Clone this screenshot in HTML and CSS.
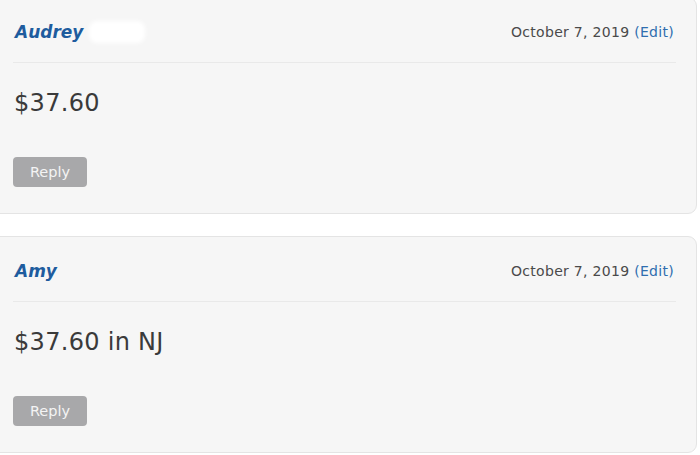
FILE: index.html
```html
<!DOCTYPE html>
<html>
<head>
<meta charset="utf-8">
<link rel="stylesheet" href="styles.css">
</head>
<body>
<div class="list">
  <div class="card">
    <div class="head">
      <span class="name">Audrey <span class="blur"></span></span>
      <span class="meta">October 7, 2019 <a class="edit">(Edit)</a></span>
    </div>
    <div class="body">$37.60</div>
    <button class="reply">Reply</button>
  </div>
  <div class="card">
    <div class="head">
      <span class="name">Amy</span>
      <span class="meta">October 7, 2019 <a class="edit">(Edit)</a></span>
    </div>
    <div class="body">$37.60 in NJ</div>
    <button class="reply">Reply</button>
  </div>
</div>
</body>
</html>
```
FILE: styles.css
```css
html, body { margin: 0; padding: 0; background: #ffffff; }
body { font-family: "DejaVu Sans", "Liberation Sans", sans-serif; color: #3c3c3c; }
.list {
  display: flex;
  flex-direction: column;
  gap: 22px;
  margin: -3px 3px 0 -10px;
}
.card {
  background: #f6f6f6;
  border: 1px solid #e4e4e4;
  border-radius: 9px;
  padding: 0 20px 26px 22px;
  display: flex;
  flex-direction: column;
  align-items: flex-start;
}
.head {
  align-self: stretch;
  display: flex;
  justify-content: space-between;
  align-items: center;
  padding: 22px 2px 18px 2px;
  line-height: 24px;
  border-bottom: 1px solid #e9e9e9;
}
.name {
  font-weight: 700;
  font-style: italic;
  font-size: 17px;
  color: #1e5c9e;
  display: flex;
  align-items: center;
  gap: 6px;
}
.blur {
  display: inline-block;
  width: 56px;
  height: 22px;
  background: #ffffff;
  border-radius: 8px;
  filter: blur(2px);
}
.meta { font-size: 14px; letter-spacing: 0.3px; color: #4a4a4a; }
.edit { color: #2f6eaf; }
.body {
  margin-top: 25px;
  font-size: 24px;
  letter-spacing: 0.3px;
  line-height: 30px;
  color: #3a3a3a;
  padding-left: 1px;
}
.reply {
  margin-top: 39px;
  width: 74px;
  height: 30px;
  border: none;
  border-radius: 4px;
  background: #a8a8aa;
  color: #f4f4f4;
  font-family: inherit;
  font-size: 14.5px;
  padding: 0;
}
```
